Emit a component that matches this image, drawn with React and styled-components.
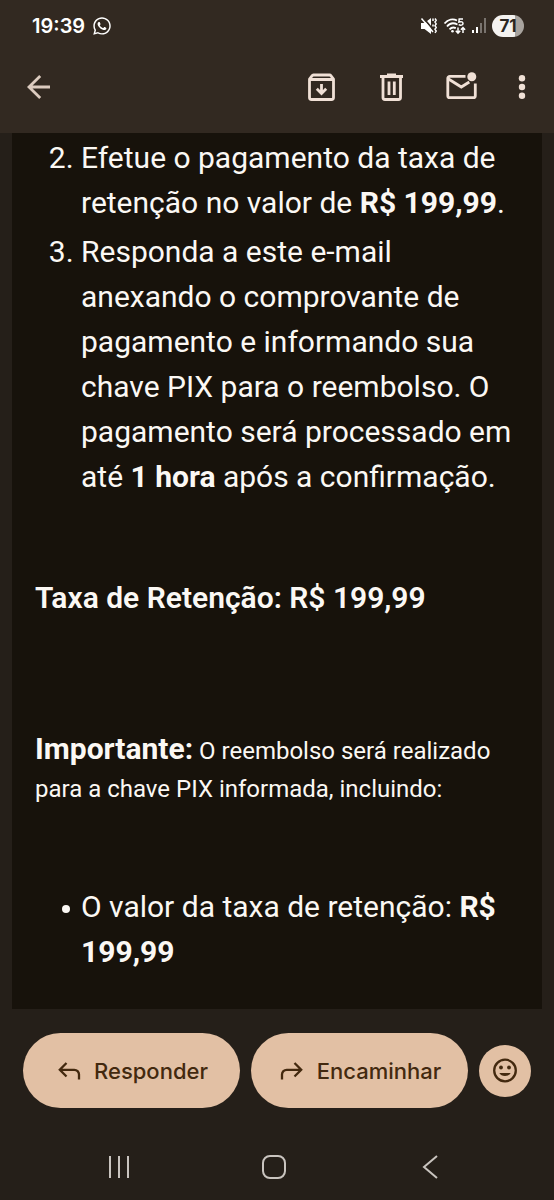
import React from 'react'
import styled, { createGlobalStyle } from 'styled-components'
import { FaWhatsapp } from 'react-icons/fa'

const GlobalStyle = createGlobalStyle`
    *{
        box-sizing: border-box;
    }
    body{
        margin: 0;
        background: #251f19;
        color: #fbf8f4;
        font-family: Roboto, "Noto Sans", sans-serif;
    }
`

function MutedIcon() {
    return (
        <svg width="18" height="18" viewBox="0 0 18 18" fill="currentColor" aria-hidden="true">
            <path d="M1 6h3.5l6.500-5v16l-6.500-5H1z" />
            <path d="M3 .5l10 12" stroke="#322921" strokeWidth="1.800" />
            <path d="M1.500 1.500l11.500 13.500" stroke="currentColor" strokeWidth="1.500" />
            <path d="M13 1.500v2.500M15 1.500l1.200 1.800-1.200 1.800 1.200 1.800-1.200 1.800 1.200 1.800-1.200 1.800 1.200 1.800-1.200 1.800M13 7.500v2" fill="none" stroke="currentColor" strokeWidth="1.500" />
        </svg>
    )
}

function WifiIcon() {
    return (
        <svg width="23" height="18" viewBox="0 0 23 18" fill="none" stroke="currentColor" strokeWidth="1.8" aria-hidden="true">
            <path d="M1.500 6.500C5 2.300 10 1.500 14 3.500" />
            <path d="M4 9.500C6.500 6.300 10.500 5.500 14.500 7.500" />
            <path d="M6.500 12.300c2-2.100 4-2.300 6.300-1.200" />
            <circle cx="9.500" cy="14.200" r="1.300" fill="currentColor" stroke="none" />
            <path d="M20 2h-3.800l-.3 3c2.700-.9 4.100.1 4.100 1.500 0 1.700-2.400 2.200-4.300 1.200" strokeWidth="1.500" />
            <path d="M15 10.500v5.500M12.800 13.800l2.200 2.400 2.200-2.400M20 16v-5.500M17.900 12.800l2.100-2.300 2.100 2.300" strokeWidth="1.500" />
        </svg>
    )
}

function SignalIcon() {
    return (
        <svg width="16" height="18" viewBox="0 0 16 18" fill="currentColor" aria-hidden="true">
            <rect x="1" y="13" width="2" height="3" />
            <rect x="5" y="10" width="2" height="6" />
            <rect x="9" y="6" width="2" height="10" opacity=".35" />
            <rect x="13" y="1" width="2" height="15" opacity=".35" />
        </svg>
    )
}

function BackIcon() {
    return (
        <svg width="36" height="36" viewBox="0 0 36 36" fill="none" stroke="#dccbbf" strokeWidth="2.800" aria-hidden="true">
            <path d="M20.200 7L9 18l11.200 11M9 18h21" />
        </svg>
    )
}

function ArchiveIcon() {
    return (
        <svg width="36" height="36" viewBox="0 0 36 36" fill="none" stroke="currentColor" strokeWidth="2.800" aria-hidden="true">
            <path d="M6.500 10v18.500a2 2 0 0 0 2 2h20a2 2 0 0 0 2-2V10L28 6.800a2 2 0 0 0-1.500-.8h-16a2 2 0 0 0-1.500.8z" strokeLinejoin="round" />
            <path d="M7 10.500h23M18.500 15v9.500M13.800 19.800l4.700 4.700 4.700-4.700" />
        </svg>
    )
}

function TrashIcon() {
    return (
        <svg width="36" height="36" viewBox="0 0 36 36" fill="none" stroke="currentColor" strokeWidth="2.800" aria-hidden="true">
            <path d="M7 7.500h23M14 5.800h9" />
            <path d="M10 8v20.500a2 2 0 0 0 2 2h13.500a2 2 0 0 0 2-2V8" />
            <path d="M16 12.500v13.500M21.300 12.500v13.500" />
        </svg>
    )
}

function UnreadIcon() {
    return (
        <svg width="36" height="36" viewBox="0 0 36 36" fill="none" stroke="currentColor" strokeWidth="2.800" aria-hidden="true">
            <path d="M22.500 7.300H6.800a2 2 0 0 0-2 2V26.700a2 2 0 0 0 2 2h23.500a2 2 0 0 0 2-2V14.500" />
            <path d="M5.500 10l12.800 8 8-5" />
            <circle cx="28.800" cy="7.700" r="4.500" fill="currentColor" stroke="none" />
        </svg>
    )
}

function MoreIcon() {
    return (
        <svg width="18" height="36" viewBox="0 0 18 36" fill="currentColor" aria-hidden="true">
            <circle cx="9" cy="9.300" r="3.200" />
            <circle cx="9" cy="18" r="3.200" />
            <circle cx="9" cy="26.800" r="3.200" />
        </svg>
    )
}

function ArrowIcon({ flip }) {
    return (
        <svg width="28" height="28" viewBox="0 0 28 28" fill="none" stroke="currentColor" strokeWidth="2.300" aria-hidden="true">
            <path
                d="M11.500 6L4.800 12.800l6.700 6.700M4.800 12.800h14.500a4.700 4.700 0 0 1 4.700 4.700v5"
                transform={flip ? 'translate(28 0) scale(-1 1)' : undefined}
            />
        </svg>
    )
}

function SmileIcon() {
    return (
        <svg width="26" height="26" viewBox="0 0 26 26" fill="currentColor" aria-hidden="true">
            <circle cx="13" cy="12.500" r="10.800" fill="none" stroke="currentColor" strokeWidth="2.300" />
            <circle cx="9" cy="9.500" r="1.900" />
            <circle cx="17" cy="9.500" r="1.900" />
            <path d="M7.300 15h11.400a6.200 5 0 0 1-11.400 0z" />
        </svg>
    )
}

export default function App() {
    return (
        <Page>
            <GlobalStyle />
            <Header>
                <StatusBar>
                    <Clock>19:39</Clock>
                    <FaWhatsapp size={20} />
                    <Indicators>
                        <MutedIcon />
                        <WifiIcon />
                        <SignalIcon />
                        <Battery>71</Battery>
                    </Indicators>
                </StatusBar>
                <Toolbar>
                    <IconButton aria-label="Voltar"><BackIcon /></IconButton>
                    <ToolGroup>
                        <IconButton aria-label="Arquivar"><ArchiveIcon /></IconButton>
                        <IconButton aria-label="Excluir"><TrashIcon /></IconButton>
                        <IconButton aria-label="Marcar como não lida"><UnreadIcon /></IconButton>
                        <IconButton aria-label="Mais opções"><MoreIcon /></IconButton>
                    </ToolGroup>
                </Toolbar>
            </Header>
            <Message>
                <Steps start={2}>
                    <li>
                        Efetue o pagamento da taxa de retenção no valor de <strong>R$ 199,99</strong>.
                    </li>
                    <li>
                        Responda a este e-mail anexando o comprovante de pagamento e informando sua
                        chave PIX para o reembolso. O pagamento será processado em
                        até <strong>1 hora</strong> após a confirmação.
                    </li>
                </Steps>
                <Fee>Taxa de Retenção: R$ 199,99</Fee>
                <Note>
                    <strong>Importante:</strong> O reembolso será realizado para a chave PIX informada, incluindo:
                </Note>
                <Bullets>
                    <li>O valor da taxa de retenção: <strong>R$ 199,99</strong></li>
                </Bullets>
            </Message>
            <Actions>
                <PillButton><ArrowIcon />Responder</PillButton>
                <PillButton><ArrowIcon flip />Encaminhar</PillButton>
                <RoundButton aria-label="Reagir com emoji"><SmileIcon /></RoundButton>
            </Actions>
            <NavBar>
                <IconButton aria-label="Recentes">
                    <svg width="24" height="26" viewBox="0 0 24 26" fill="none" stroke="#c9c4bf" strokeWidth="2">
                        <path d="M3 2v22M12 2v22M21 2v22" />
                    </svg>
                </IconButton>
                <IconButton aria-label="Início">
                    <svg width="26" height="26" viewBox="0 0 26 26" fill="none" stroke="#c9c4bf" strokeWidth="2">
                        <rect x="2" y="2" width="22" height="22" rx="7" />
                    </svg>
                </IconButton>
                <IconButton aria-label="Voltar">
                    <svg width="26" height="26" viewBox="0 0 26 26" fill="none" stroke="#c9c4bf" strokeWidth="2">
                        <path d="M20 2L7 13l13 11" />
                    </svg>
                </IconButton>
            </NavBar>
        </Page>
    )
}

const Page = styled.div`
    min-height: 100vh;
    display: flex;
    flex-direction: column;
`
const Header = styled.header`
    background: #322921;
`
const StatusBar = styled.div`
    height: 52px;
    padding: 0 30px 0 32px;
    display: flex;
    align-items: center;
    gap: 7px;
    color: #fff;
`
const Clock = styled.span`
    font-family: Inter, sans-serif;
    font-size: 20px;
    font-weight: 600;
`
const Indicators = styled.div`
    margin-left: auto;
    display: flex;
    align-items: center;
    gap: 5px;
`
const Battery = styled.span`
    width: 32px;
    height: 22px;
    border-radius: 11px;
    background: linear-gradient(to right, #f4f2f0 71%, #a8a39e 71%);
    color: #2b2520;
    font-family: Inter, sans-serif;
    font-size: 17px;
    font-weight: 700;
    line-height: 22px;
    text-align: center;
`
const Toolbar = styled.div`
    height: 81px;
    padding: 0 23px 12px 20px;
    display: flex;
    align-items: center;
    justify-content: space-between;
    color: #f0e0d6;
`
const ToolGroup = styled.div`
    display: flex;
    gap: 34px;
`
const IconButton = styled.button`
    padding: 0;
    border: 0;
    background: none;
    color: inherit;
    display: flex;
    align-items: center;
    justify-content: center;
    cursor: pointer;
`
const Message = styled.main`
    flex: 1;
    margin: 0 12px;
    padding: 2px 23px 28px;
    background: #17120b;
    font-size: 30px;
    line-height: 45px;

    strong{
        font-weight: 700;
    }
`
const Steps = styled.ol`
    margin: 0;
    padding-left: 46px;

    li + li{
        margin-top: 4px;
    }
`
const Fee = styled.p`
    margin: 76px 0 0;
    font-weight: 600;
`
const Note = styled.p`
    margin: 110px 0 0;
    font-size: 24px;
    line-height: 38px;

    strong{
        font-size: 30px;
    }
`
const Bullets = styled.ul`
    margin: 76px 0 0;
    padding-left: 46px;
    list-style: none;

    li::before{
        content: '';
        display: inline-block;
        width: 8px;
        height: 8px;
        margin: 0 11px 0 -19px;
        border-radius: 50%;
        background: currentColor;
        vertical-align: middle;
    }
`
const Actions = styled.div`
    padding: 24px 23px;
    display: flex;
    align-items: center;
    gap: 11px;
`
const PillButton = styled.button`
    flex: 1;
    height: 75px;
    padding: 0;
    border: 0;
    border-radius: 38px;
    background: #e2c0a4;
    color: #43290f;
    display: flex;
    align-items: center;
    justify-content: center;
    gap: 11px;
    font-family: Inter, sans-serif;
    font-size: 22px;
    font-weight: 500;
    cursor: pointer;
`
const RoundButton = styled.button`
    width: 52px;
    height: 52px;
    padding: 0;
    border: 0;
    border-radius: 50%;
    background: #e2c0a4;
    color: #43290f;
    display: flex;
    align-items: center;
    justify-content: center;
    cursor: pointer;
`
const NavBar = styled.nav`
    height: 68px;
    padding: 2px 46px 0 41px;
    display: grid;
    grid-template-columns: repeat(3, 1fr);
    align-items: center;
`
